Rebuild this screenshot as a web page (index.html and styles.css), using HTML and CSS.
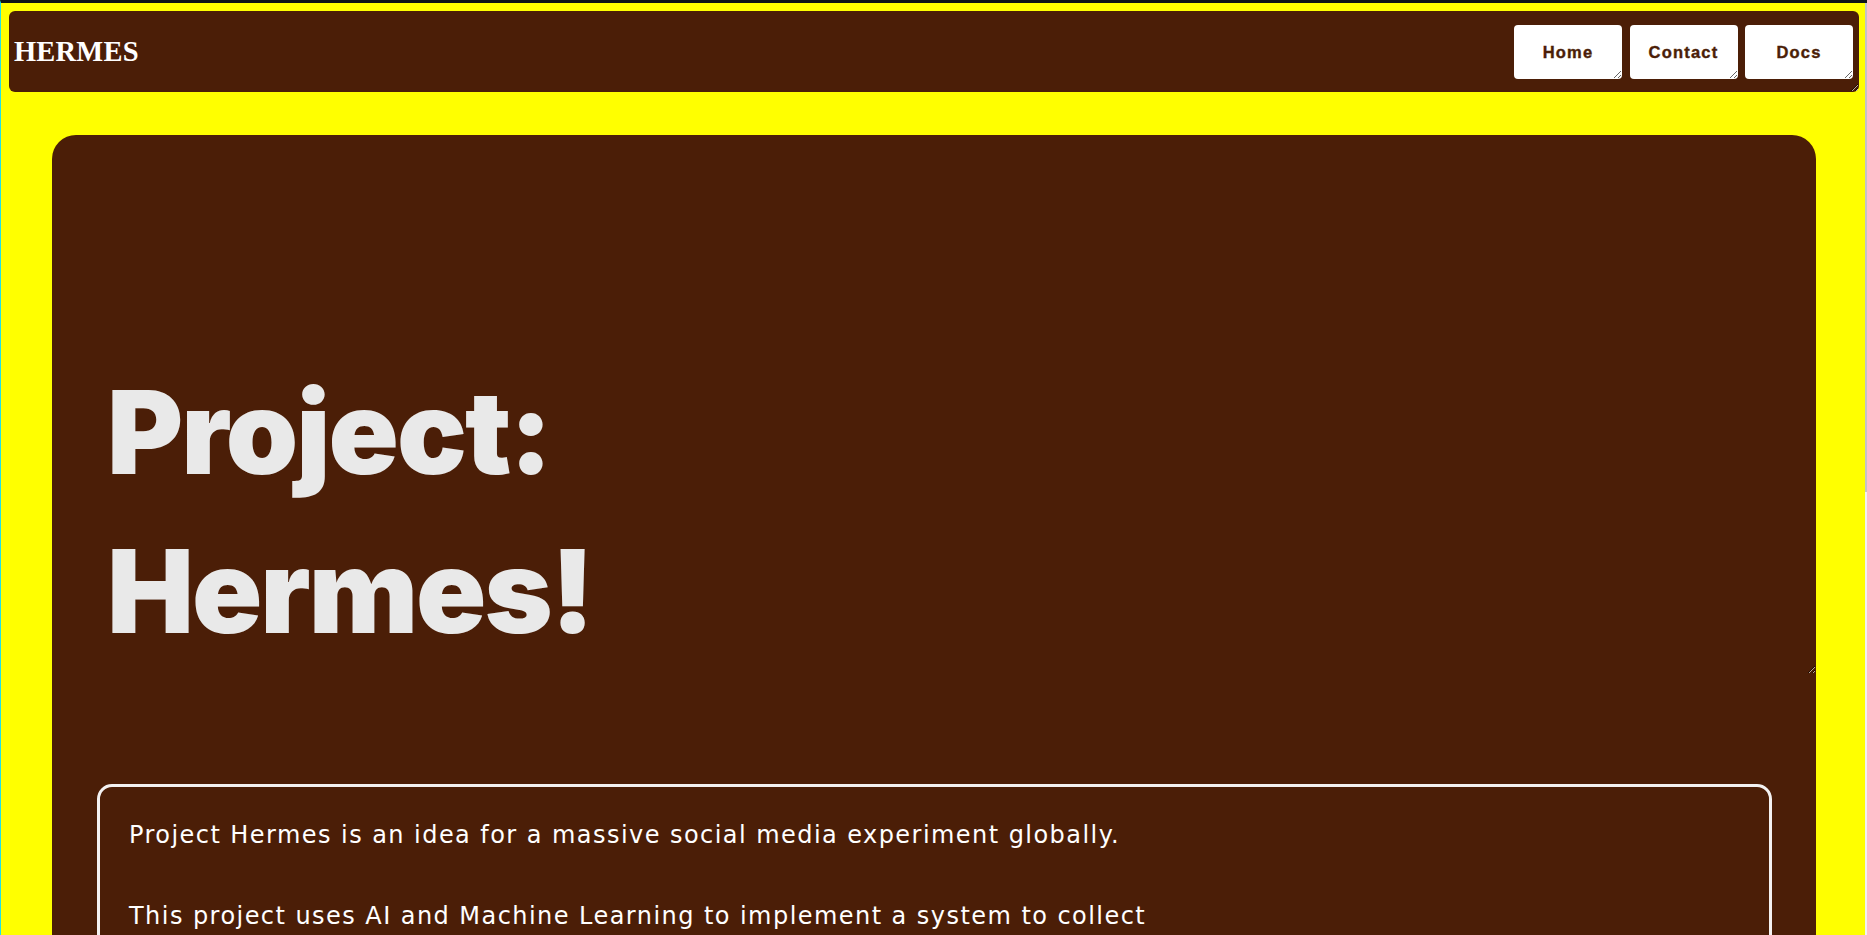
FILE: index.html
```html
<!DOCTYPE html>
<html lang="en">
<head>
<meta charset="utf-8">
<title>Project Hermes</title>
<link rel="stylesheet" href="styles.css">
</head>
<body>
<header class="navbar">
  <div class="brand">HERMES</div>
  <nav class="nav-links">
    <a class="nav-btn" href="#">Home</a>
    <a class="nav-btn" href="#">Contact</a>
    <a class="nav-btn" href="#">Docs</a>
  </nav>
</header>
<main class="hero">
  <div class="hero-title">
    <h1 class="title">Project:<br>Hermes!</h1>
  </div>
  <section class="about">
    <p class="about-text">Project Hermes is an idea for a massive social media experiment globally.<br><br>This project uses AI and Machine Learning to implement a system to collect</p>
  </section>
</main>
<div class="scrollbar"><div class="scroll-thumb"></div></div>
</body>
</html>
```
FILE: styles.css
```css
html {
  background: #ffff00;
  border-top: 3px solid #0e1418;
  border-left: 1px solid #22e0e8;
}
body {
  margin: 8px 8px 0 8px;
  padding-bottom: 43px;
  background: #ffff00;
}
.scrollbar {
  position: fixed;
  top: 3px;
  right: 0;
  bottom: 0;
  width: 2px;
  background: #f1f1f1;
}
.scroll-thumb {
  height: 489px;
  background: #c4c4c4;
}
.navbar {
  display: flex;
  align-items: center;
  justify-content: space-between;
  height: 81px;
  box-sizing: border-box;
  padding: 0 6px 0 5px;
  background: #4b1e07;
  border-radius: 6px;
  resize: both;
  overflow: hidden;
}
.brand {
  font-family: "Liberation Serif", "Times New Roman", serif;
  font-weight: bold;
  font-size: 28.5px;
  color: #ffffff;
  letter-spacing: 0.2px;
}
.nav-links {
  display: flex;
  gap: 7.5px;
  padding-top: 1px;
}
.nav-btn {
  display: flex;
  align-items: center;
  justify-content: center;
  width: 108px;
  height: 54px;
  background: #ffffff;
  border-radius: 4px;
  color: #4b1e07;
  text-decoration: none;
  font-family: "Liberation Sans", Arial, sans-serif;
  font-weight: bold;
  font-size: 16.5px;
  letter-spacing: 1.2px;
  -webkit-text-stroke: 0.4px #4b1e07;
  resize: both;
  overflow: hidden;
}
.hero {
  margin: 43px 43px 0 43px;
  background: #4b1e07;
  border-radius: 24px;
  padding-bottom: 45px;
}
.hero-title {
  height: 539px;
  box-sizing: border-box;
  padding: 217.5px 0 0 55px;
  resize: both;
  overflow: hidden;
}
.title {
  margin: 0;
  font-family: Inter, "Open Sans", sans-serif;
  font-weight: 900;
  font-size: 116px;
  line-height: 159px;
  color: #e9e9e9;
  letter-spacing: -2px;
}
.about {
  margin: 110px 44px 0 45px;
  border: 3px solid #f3f1f1;
  border-radius: 15px;
  min-height: 880px;
  padding: 28px 29px;
}
.about-text {
  margin: 0;
  font-family: "DejaVu Sans", Inter, sans-serif;
  font-size: 24px;
  line-height: 40.5px;
  letter-spacing: 1.45px;
  color: #ffffff;
}
```
